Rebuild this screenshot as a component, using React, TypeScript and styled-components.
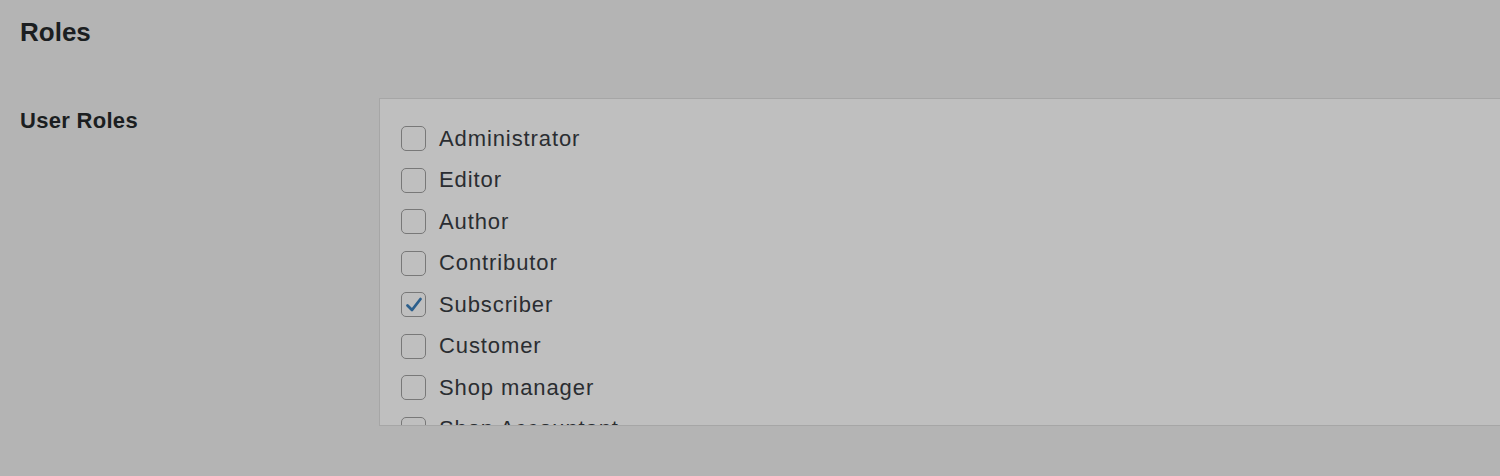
import React from 'react';
import styled, { createGlobalStyle } from 'styled-components';

const Global = createGlobalStyle`
  html, body {
    margin: 0;
    padding: 0;
    background: #b4b4b4;
    overflow: hidden;
    font-family: "Liberation Sans", Arial, sans-serif;
  }
`

const Page = styled.div`
  width: 1500px;
  height: 476px;
  padding: 0 20px;
  box-sizing: border-box;
  overflow: hidden;
`

const Title = styled.h2`
  margin: 0;
  padding-top: 16px;
  font-size: 26px;
  line-height: 32px;
  font-weight: 700;
  color: #1b1e21;
`

const FormRow = styled.div`
  display: grid;
  grid-template-columns: 359px 1160px;
  margin-top: 50px;
`

const Label = styled.div`
  padding-top: 10px;
  font-size: 22px;
  line-height: 26px;
  font-weight: 700;
  letter-spacing: 0.3px;
  color: #1b1e21;
`

const RoleBox = styled.div`
  height: 328px;
  box-sizing: border-box;
  border: 1px solid #a6a6a6;
  border-right: none;
  background: #bfbfbf;
  padding: 19px 0 0 21px;
  overflow: hidden;
`

const Row = styled.label`
  display: flex;
  align-items: center;
  gap: 13px;
  height: 41.5px;
  font-size: 22px;
  letter-spacing: 0.9px;
  color: #2a2d31;
`

const Box = styled.span<{ $checked?: boolean }>`
  width: 25px;
  height: 25px;
  box-sizing: border-box;
  border: 1.5px solid #787878;
  border-radius: 5px;
  display: flex;
  align-items: center;
  justify-content: center;
  flex-shrink: 0;
`

const roles = [
  { name: 'Administrator' },
  { name: 'Editor' },
  { name: 'Author' },
  { name: 'Contributor' },
  { name: 'Subscriber', checked: true },
  { name: 'Customer' },
  { name: 'Shop manager' },
  { name: 'Shop Accountant' },
]

export default function App() {
  return (
    <Page>
      <Global />
      <Title>Roles</Title>
      <FormRow>
        <Label>User Roles</Label>
        <RoleBox>
          {roles.map(r => (
            <Row key={r.name}>
              <Box $checked={r.checked}>
                {r.checked && (
                  <svg width="20" height="20" viewBox="0 0 20 20">
                    <path d="M3.5 10.5 L8 15 L16.5 4" fill="none" stroke="#2c5f8c" strokeWidth="2.8" strokeLinecap="round" strokeLinejoin="round" />
                  </svg>
                )}
              </Box>
              {r.name}
            </Row>
          ))}
        </RoleBox>
      </FormRow>
    </Page>
  )
}
